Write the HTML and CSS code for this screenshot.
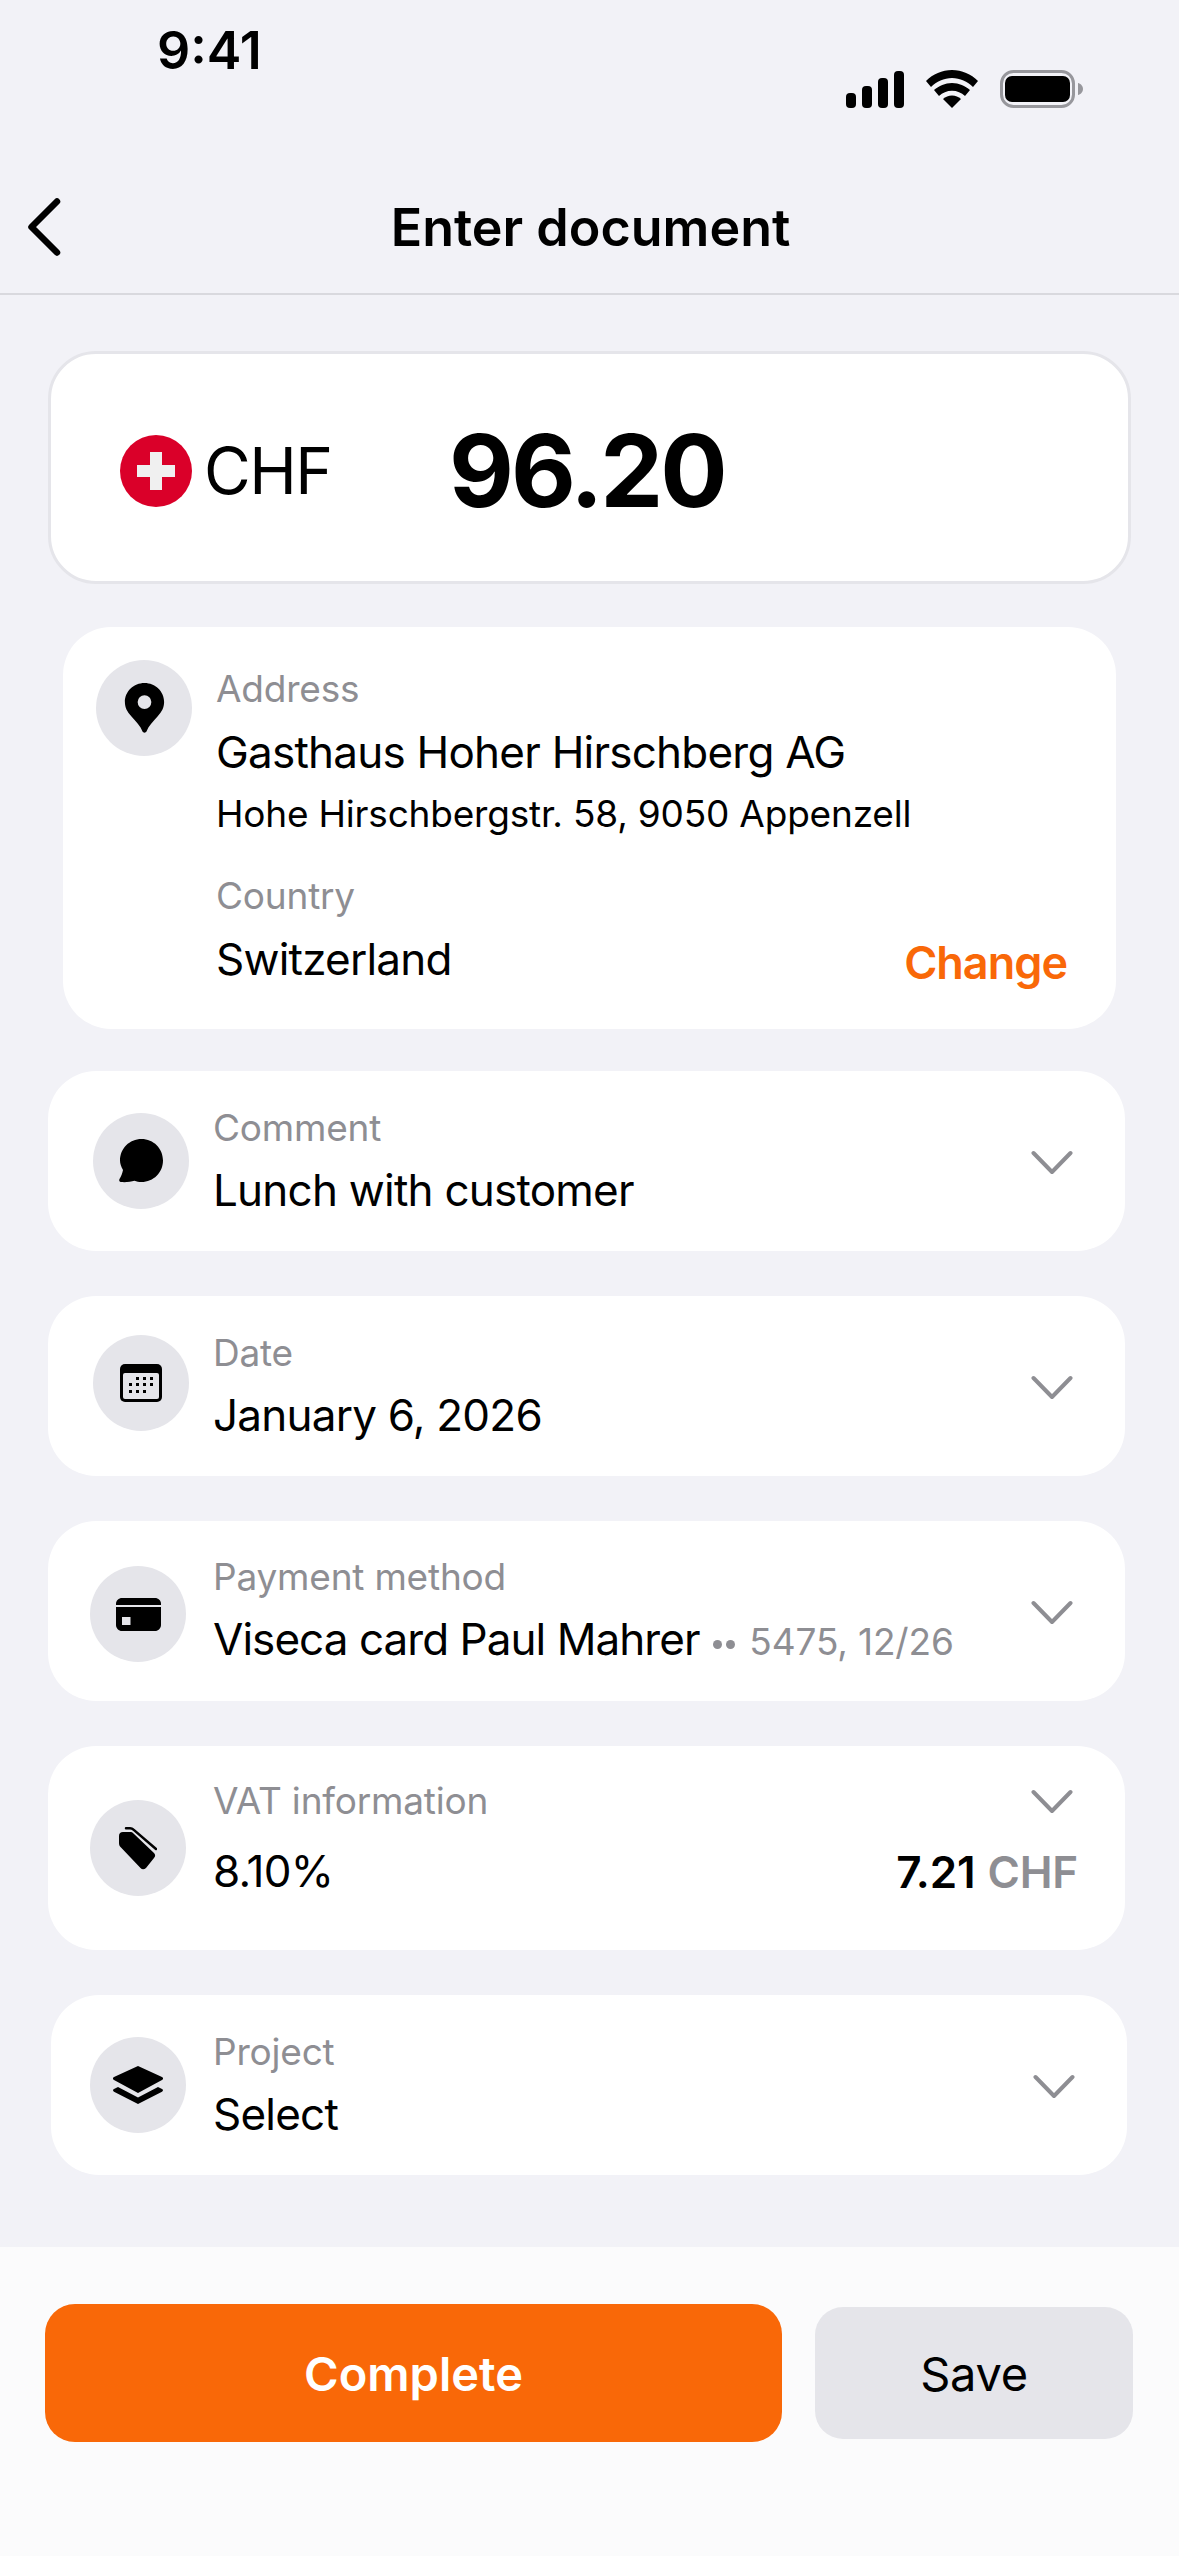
FILE: index.html
```html
<!DOCTYPE html>
<html lang="en">
<head>
    <meta charset="UTF-8">
    <meta name="viewport" content="width=device-width, initial-scale=1.0">
    <title>Enter document</title>
    <link rel="stylesheet" href="styles.css">
</head>
<body>

<div class="screen">
    <div class="status-bar">
        <span class="clock">9:41</span>
        <div class="status-icons">
            <svg width="58" height="37" viewBox="0 0 58 37"><rect x="0" y="22" width="10" height="15" rx="4"/><rect x="16" y="15" width="10" height="22" rx="4"/><rect x="32" y="7" width="10" height="30" rx="4"/><rect x="48" y="0" width="10" height="37" rx="4"/></svg>
            <svg width="52" height="38" viewBox="0 0 52 38"><path d="M26 0C16 0 7 4 0 11l5 6c5.500-5.500 13-9 21-9s15.500 3.500 21 9l5-6C45 4 36 0 26 0z"/><path d="M26 13c-7 0-13 3-18 7l5 6c3.500-3.300 8-5.300 13-5.300s9.500 2 13 5.300l5-6c-5-4-11-7-18-7z"/><path d="M26 25.500c-3.500 0-6.500 1.200-9 3.500l9 9 9-9c-2.500-2.300-5.500-3.500-9-3.500z"/></svg>
            <svg width="83" height="38" viewBox="0 0 83 38"><rect x="1.500" y="1.500" width="72" height="35" rx="12" fill="none" stroke="#97979c" stroke-width="3"/><rect x="5" y="6" width="65" height="26" rx="7"/><path d="M78 13c2.500.5 5 3 5 6s-2.500 5.500-5 6z" fill="#97979c"/></svg>
        </div>
    </div>

    <div class="nav-bar">
        <svg class="back" width="36" height="58" viewBox="0 0 36 58"><path d="M31 3.500L5.500 29 31 54.500" fill="none" stroke="#000" stroke-width="6.500" stroke-linecap="round" stroke-linejoin="round"/></svg>
        <h1>Enter document</h1>
    </div>

    <div class="content">
        <div class="amount-card">
            <div class="currency">
                <svg width="72" height="72" viewBox="0 0 72 72"><circle cx="36" cy="36" r="36" fill="#da0029"/><path d="M30 17h12v13h13v12H42v13H30V42H17V30h13z" fill="#f0f0f0"/></svg>
                <span>CHF</span>
            </div>
            <div class="amount">96.20</div>
        </div>

        <div class="card address-card">
            <div class="icon-circle">
                <svg width="41" height="50" viewBox="0 0 40 51"><path fill-rule="evenodd" d="M20 0C9 0 0 8.500 0 19.500c0 6 2.500 10 6.500 14.500C11 39 16 44 18 49.500c.7 1.500 3.300 1.500 4 0C24 44 29 39 33.500 34c4-4.500 6.500-8.500 6.500-14.500C40 8.500 31 0 20 0zm0 12.500a7 7 0 1 1 0 14 7 7 0 0 1 0-14z"/></svg>
            </div>
            <div class="address-text">
                <div class="label">Address</div>
                <div class="value">Gasthaus Hoher Hirschberg AG</div>
                <div class="street">Hohe Hirschbergstr. 58, 9050 Appenzell</div>
                <div class="label country-label">Country</div>
                <div class="country-row">
                    <div class="value">Switzerland</div>
                    <div class="change">Change</div>
                </div>
            </div>
        </div>

        <div class="card row-card">
            <div class="icon-circle">
                <svg width="46" height="44" viewBox="0 0 44 44"><path d="M22.500 0C34.500 0 44 9.500 44 21.500S34.500 43 22.500 43c-2.500 0-5-.4-7-1.300-3.500 1-8.500 1.800-13.500 1.300-1.500-.2-2.300-1.500-1.500-3 1.500-2.500 3-6 3.500-9C2 27.500 1 24.500 1 21.500 1 9.500 10.500 0 22.500 0z"/></svg>
            </div>
            <div class="row-text">
                <div class="label">Comment</div>
                <div class="value">Lunch with customer</div>
            </div>
            <svg class="chevron" width="42" height="26" viewBox="0 0 42 26"><path d="M2.500 3L21 22 39.500 3" fill="none" stroke="#8e8e93" stroke-width="4" stroke-linecap="round" stroke-linejoin="round"/></svg>
        </div>

        <div class="card row-card date-card">
            <div class="icon-circle">
                <svg width="42" height="38" viewBox="0 0 42 38"><rect width="42" height="38" rx="5"/><rect x="3" y="9" width="36" height="26" rx="2" fill="#e5e5ea"/><g><rect x="16" y="13" width="3" height="3"/><rect x="23" y="13" width="3" height="3"/><rect x="30" y="13" width="3" height="3"/><rect x="9" y="19" width="3" height="3"/><rect x="16" y="19" width="3" height="3"/><rect x="23" y="19" width="3" height="3"/><rect x="30" y="19" width="3" height="3"/><rect x="9" y="26" width="3" height="3"/><rect x="16" y="26" width="3" height="3"/><rect x="23" y="26" width="3" height="3"/></g></svg>
            </div>
            <div class="row-text">
                <div class="label">Date</div>
                <div class="value">January 6, 2026</div>
            </div>
            <svg class="chevron" width="42" height="26" viewBox="0 0 42 26"><path d="M2.500 3L21 22 39.500 3" fill="none" stroke="#8e8e93" stroke-width="4" stroke-linecap="round" stroke-linejoin="round"/></svg>
        </div>

        <div class="card row-card payment-card">
            <div class="icon-circle">
                <svg width="45" height="33" viewBox="0 0 45 33"><path d="M6 0h33c3.300 0 6 2.500 6 5.500V7H0V5.500C0 2.500 2.700 0 6 0z"/><path fill-rule="evenodd" d="M0 9h45v18c0 3.300-2.700 6-6 6H6c-3.300 0-6-2.700-6-6zM6 19v8h8.500v-8z"/></svg>
            </div>
            <div class="row-text">
                <div class="label">Payment method</div>
                <div class="value"><span class="card-name">Viseca card Paul Mahrer</span> <span class="card-number"><i class="dot"></i><i class="dot"></i> 5475, 12/26</span></div>
            </div>
            <svg class="chevron" width="42" height="26" viewBox="0 0 42 26"><path d="M2.500 3L21 22 39.500 3" fill="none" stroke="#8e8e93" stroke-width="4" stroke-linecap="round" stroke-linejoin="round"/></svg>
        </div>

        <div class="card row-card vat-card">
            <div class="icon-circle">
                <svg width="38" height="43" viewBox="0 0 38 43"><path d="M4 5h7c1.500 0 2.500.4 3.500 1.400L35 26c1.500 1.500 1.500 3.500 0 5l-8 10c-1.800 1.800-4 1.800-5.500 0L2 20.500C.5 19 0 18 0 16V9c0-2.500 1.500-4 4-4z"/><path d="M7 1.300h4c1.500 0 2.500.4 3.500 1.400L37 22" fill="none" stroke="#000" stroke-width="2.500" stroke-linecap="round"/></svg>
            </div>
            <div class="row-text">
                <div class="label">VAT information</div>
                <div class="value">8.10%</div>
            </div>
            <div class="vat-side">
                <svg class="chevron" width="42" height="26" viewBox="0 0 42 26"><path d="M2.500 3L21 22 39.500 3" fill="none" stroke="#8e8e93" stroke-width="4" stroke-linecap="round" stroke-linejoin="round"/></svg>
                <div class="vat-amount"><b>7.21</b> <span>CHF</span></div>
            </div>
        </div>

        <div class="card row-card project-card">
            <div class="icon-circle">
                <svg width="50" height="38" viewBox="0 0 50 38"><path d="M25 0l24 11c1.500.8 1.500 2.200 0 3L25 27 1 14c-1.500-.8-1.500-2.200 0-3z"/><path d="M5 21l20 10.500L45 21l4 2c1.300.7 1.300 2 0 2.700L25 38 1 25.700c-1.300-.7-1.300-2 0-2.700z"/></svg>
            </div>
            <div class="row-text">
                <div class="label">Project</div>
                <div class="value">Select</div>
            </div>
            <svg class="chevron" width="42" height="26" viewBox="0 0 42 26"><path d="M2.500 3L21 22 39.500 3" fill="none" stroke="#8e8e93" stroke-width="4" stroke-linecap="round" stroke-linejoin="round"/></svg>
        </div>
    </div>

    <div class="footer">
        <button class="btn-complete">Complete</button>
        <button class="btn-save">Save</button>
    </div>
</div>

</body>
</html>
```

FILE: styles.css
```css
* {
    box-sizing: border-box;
}
html, body {
    margin: 0;
    padding: 0;
}
body {
    font-family: Inter, "Liberation Sans", sans-serif;
    color: #000;
    background-color: #f2f2f7;
}
.screen {
    width: 1179px;
    height: 2556px;
    display: flex;
    flex-direction: column;
    overflow: hidden;
}
.status-bar {
    height: 115px;
    display: flex;
    justify-content: space-between;
    padding: 22px 96px 0 157px;
}
.clock {
    font-size: 52px;
    font-weight: 600;
    line-height: 58px;
}
.status-icons {
    display: flex;
    align-items: center;
    gap: 22px;
    height: 40px;
    margin-top: 47px;
}
.nav-bar {
    height: 180px;
    padding: 46px 0 0 26px;
    display: flex;
    align-items: center;
    justify-content: space-between;
    position: relative;
    border-bottom: 2px solid #d9d9de;
}
.nav-bar h1 {
    position: absolute;
    left: 2px;
    right: 0;
    margin: 0;
    text-align: center;
    font-size: 52px;
    font-weight: 600;
}
.content {
    flex: 1;
    display: flex;
    flex-direction: column;
    padding-top: 56px;
}
.amount-card {
    height: 233px;
    margin: 0 48px 0 48px;
    background: #fff;
    border: 3px solid #e5e5ea;
    border-radius: 48px;
    display: flex;
    align-items: center;
    padding: 6px 0 0 69px;
}
.currency {
    display: flex;
    align-items: center;
    gap: 12px;
    width: 329px;
    font-size: 64px;
    letter-spacing: -1.5px;
}
.amount {
    font-size: 100px;
    font-weight: 700;
    letter-spacing: -3px;
}
.card {
    background: #fff;
    border-radius: 48px;
}
.icon-circle {
    width: 96px;
    height: 96px;
    border-radius: 50%;
    background: #e5e5ea;
    flex-shrink: 0;
    display: flex;
    align-items: center;
    justify-content: center;
}
.label {
    font-size: 37px;
    line-height: 48px;
    letter-spacing: -0.2px;
    color: #8e8e93;
}
.value {
    font-size: 44px;
    line-height: 56px;
    letter-spacing: -0.77px;
}
.address-card {
    height: 402px;
    margin: 43px 63px 0 63px;
    display: flex;
    padding: 33px 49px 0 33px;
    gap: 24px;
}
.address-text {
    flex: 1;
    padding-top: 5px;
}
.address-text .value {
    margin-top: 11px;
}
.street {
    font-size: 37px;
    line-height: 48px;
    letter-spacing: -0.2px;
    margin-top: 10px;
}
.country-label {
    margin-top: 34px;
}
.country-row {
    display: flex;
    justify-content: space-between;
    align-items: flex-end;
}
.change {
    color: #f96808;
    font-size: 45px;
    font-weight: 600;
    line-height: 56px;
    letter-spacing: -1px;
    position: relative;
    top: 4px;
}
.row-card {
    height: 180px;
    margin: 45px 54px 0 48px;
    padding: 0 52px 0 45px;
    display: flex;
    align-items: center;
    gap: 24px;
}
.address-card + .row-card {
    margin-top: 42px;
}
.row-card > .chevron {
    margin-top: 4px;
}
.row-text {
    flex: 1;
}
.row-text .value {
    margin-top: 10px;
}
.date-card .icon-circle {
    margin-bottom: 6px;
}
.payment-card {
    padding-left: 42px;
    gap: 27px;
}
.payment-card .icon-circle {
    margin-top: 6px;
}
.card-name {
    letter-spacing: -0.95px;
}
.card-number {
    color: #8e8e93;
    font-size: 37px;
    letter-spacing: -0.15px;
    margin-left: 2px;
}
.dot {
    display: inline-block;
    width: 9px;
    height: 9px;
    margin-right: 4px;
    border-radius: 50%;
    background: #8e8e93;
    vertical-align: 6px;
}
.vat-card {
    height: 204px;
    padding-left: 42px;
    padding-right: 47px;
    gap: 27px;
}
.vat-card .row-text {
    margin-bottom: 20px;
}
.vat-card .row-text .value {
    margin-top: 18px;
}
.vat-side {
    align-self: stretch;
    display: flex;
    flex-direction: column;
    align-items: flex-end;
    padding-top: 43px;
}
.vat-side .chevron {
    margin-right: 5px;
}
.vat-amount {
    margin-top: 29px;
    font-size: 44px;
    line-height: 56px;
    letter-spacing: -0.2px;
}
.vat-amount b {
    font-weight: 600;
}
.vat-amount span {
    color: #8e8e93;
    font-weight: 600;
}
.project-card {
    margin: 45px 52px 0 51px;
    padding-left: 39px;
    gap: 27px;
}
.footer {
    height: 309px;
    background: #fbfbfc;
    display: flex;
    align-items: flex-start;
    padding: 57px 46px 0 45px;
}
.footer button {
    border: none;
    font-family: inherit;
    font-size: 47px;
}
.btn-complete {
    width: 737px;
    height: 138px;
    border-radius: 30px;
    background: #f96808;
    color: #fff;
    font-weight: 600;
}
.btn-save {
    width: 318px;
    height: 132px;
    margin-top: 3px;
    margin-left: 33px;
    border-radius: 28px;
    background: #e5e5ea;
    color: #000;
    letter-spacing: -0.3px;
}
```
